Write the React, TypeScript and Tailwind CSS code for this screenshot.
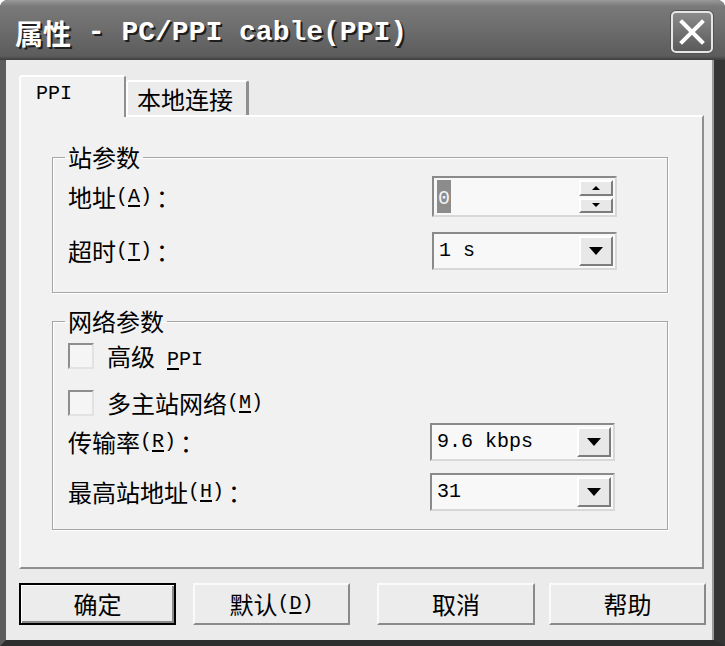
import React from "react";

/* ─── text helpers ─────────────────────────────────── */
function Lat({ children }: { children: React.ReactNode }) {
  return (
    <span className="font-['Liberation_Mono','Noto_Sans_CJK_SC',monospace] text-[20px]">
      {children}
    </span>
  );
}

function Key({ k }: { k: string }) {
  return (
    <Lat>
      (<span className="underline underline-offset-[3px]">{k}</span>)
    </Lat>
  );
}

/* ─── controls ─────────────────────────────────────── */
function DropBtn() {
  return (
    <div className="w-[34px] flex items-center justify-center bg-[#e8e8e8] border-2 border-t-white border-l-white border-r-[#7c7c7c] border-b-[#7c7c7c]">
      <svg width="14" height="8" viewBox="0 0 14 8">
        <path d="M0 0h14L7 8z" fill="#000" />
      </svg>
    </div>
  );
}

function Combo({ value }: { value: string }) {
  return (
    <div className="w-[185px] h-[38px] flex bg-[#f8f8f8] border-2 border-t-[#8a8a8a] border-l-[#8a8a8a] border-r-[#d8d8d8] border-b-[#d8d8d8] p-[2px]">
      <div className="flex-1 flex items-center pl-[3px] text-black">
        <Lat>{value}</Lat>
      </div>
      <DropBtn />
    </div>
  );
}

function Spin() {
  return (
    <div className="w-[185px] h-[41px] flex bg-[#f8f8f8] border-2 border-t-[#8a8a8a] border-l-[#8a8a8a] border-r-[#d8d8d8] border-b-[#d8d8d8] p-[2px]">
      <div className="flex-1 flex items-center pl-[1px]">
        <span className="bg-[#8c8c8c] text-[#f4f4f4] leading-[28px] px-[1px]">
          <Lat>0</Lat>
        </span>
      </div>
      <div className="w-[34px] flex flex-col gap-[2px]">
        <div className="flex-1 flex items-center justify-center bg-[#e8e8e8] border-2 border-t-white border-l-white border-r-[#7c7c7c] border-b-[#7c7c7c]">
          <svg width="8" height="4" viewBox="0 0 8 4">
            <path d="M0 4h8L4 0z" fill="#000" />
          </svg>
        </div>
        <div className="flex-1 flex items-center justify-center bg-[#e8e8e8] border-2 border-t-white border-l-white border-r-[#7c7c7c] border-b-[#7c7c7c]">
          <svg width="8" height="4" viewBox="0 0 8 4">
            <path d="M0 0h8L4 4z" fill="#000" />
          </svg>
        </div>
      </div>
    </div>
  );
}

function Check() {
  return (
    <div className="w-[26px] h-[26px] bg-[#f5f5f5] border-2 border-t-[#8e8e8e] border-l-[#8e8e8e] border-r-[#e2e2e2] border-b-[#e2e2e2]" />
  );
}

function Group({ title, children, className = "" }: { title: string; children: React.ReactNode; className?: string }) {
  return (
    <fieldset
      className={`ml-[31px] w-[616px] border border-[#a6a6a6] shadow-[inset_1px_1px_0_#fff,1px_1px_0_#fff] ${className}`}
    >
      <legend className="ml-[12px] px-[3px] leading-[28px] text-[24px] text-black">{title}</legend>
      {children}
    </fieldset>
  );
}

function Button({ children, primary, className = "" }: { children: React.ReactNode; primary?: boolean; className?: string }) {
  return (
    <div
      className={`h-[42px] flex items-center justify-center text-[24px] text-black bg-[#ececec] ${
        primary
          ? "border-2 border-black shadow-[inset_1px_1px_0_#fff,inset_-2px_-2px_0_#8a8a8a]"
          : "border-2 border-t-[#fafafa] border-l-[#fafafa] border-r-[#8a8a8a] border-b-[#8a8a8a]"
      } ${className}`}
    >
      {children}
    </div>
  );
}

/* ─── window ───────────────────────────────────────── */
export default function App() {
  return (
    <div className="w-[725px] h-[646px] bg-white font-['Noto_Sans_CJK_SC',sans-serif] overflow-hidden">
      <div className="w-full h-full flex flex-col rounded-t-[8px] overflow-hidden bg-[#4a4a4a]">
        {/* Title bar */}
        <div className="h-[60px] flex items-center pt-[4px] pl-[15px] pr-[12px] bg-[linear-gradient(#9a9a9a_0px,#7a7a7a_6px,#6c6c6c_30px,#5c5c5c_56px,#3e3e3e_60px)]">
          <div className="flex-1 flex items-center pt-[2px] text-white font-bold text-[28px] [text-shadow:2px_2px_0_#1e1e1e]">
            <span>属性</span>
            <span className="font-['Liberation_Mono',monospace] text-[28px] whitespace-pre"> - PC/PPI cable(PPI)</span>
          </div>
          <div className="w-[42px] h-[42px] rounded-[5px] border-2 border-[#e6e6e6] bg-[linear-gradient(#8a8a8a,#5a5a5a)] flex items-center justify-center shadow-[0_0_0_1px_#555]">
            <svg width="26" height="26" viewBox="0 0 26 26">
              <path d="M3 3L23 23M23 3L3 23" stroke="#fff" strokeWidth="4" strokeLinecap="square" />
            </svg>
          </div>
        </div>

        {/* Body */}
        <div className="flex-1 flex flex-col bg-[#ebebeb] border-l-[6px] border-r-[11px] border-b-[6px] border-l-[#5c5c5c] border-r-[#353535] border-b-[#2e2e2e] shadow-[inset_-2px_0_0_#9a9a9a]">
          {/* Tabs */}
          <div className="flex items-end ml-[13px] mt-[15px]">
            <div className="relative z-10 -mb-[2px] w-[107px] h-[42px] flex items-start pt-[5px] pl-[15px] leading-[24px] bg-[#f1f1f1] border-2 border-b-0 border-t-white border-l-white border-r-[#8f8f8f] rounded-t-[3px]">
              <Lat>PPI</Lat>
            </div>
            <div className="w-[123px] h-[35px] flex items-start pt-[3px] pl-[9px] leading-[28px] text-[24px] text-black bg-[#ececec] border-2 border-b-0 border-t-white border-l-white border-r-[#8f8f8f] border-r-[3px] rounded-t-[3px]">
              本地连接
            </div>
          </div>

          {/* Panel */}
          <div className="ml-[13px] w-[685px] h-[454px] bg-[#f1f1f1] border-2 border-t-white border-l-white border-r-[#8f8f8f] border-b-[#8f8f8f] pt-[26px] text-black">
            <Group title="站参数">
              <div className="pl-[15px] pt-[5px] pb-[22px] flex flex-col gap-[15px] text-[24px]">
                <div className="flex items-center h-[41px]">
                  <div className="w-[364px] flex items-center">
                    地址<Key k="A" /><span className="ml-[4px]">：</span>
                  </div>
                  <Spin />
                </div>
                <div className="flex items-center h-[38px]">
                  <div className="w-[364px] flex items-center">
                    超时<Key k="T" /><span className="ml-[4px]">：</span>
                  </div>
                  <Combo value="1 s" />
                </div>
              </div>
            </Group>

            <Group title="网络参数" className="mt-[14px]">
              <div className="pl-[15px] pt-[8px] pb-[18px] flex flex-col text-[24px]">
                <div className="flex items-center h-[25px]">
                  <Check />
                  <span className="ml-[13px]">高级</span>
                  <span className="ml-[12px]">
                    <Lat>
                      <span className="underline underline-offset-[3px]">P</span>PI
                    </Lat>
                  </span>
                </div>
                <div className="flex items-center h-[25px] mt-[22px]">
                  <Check />
                  <span className="ml-[13px]">多主站网络</span>
                  <Key k="M" />
                </div>
                <div className="flex items-center h-[38px] mt-[8px]">
                  <div className="w-[362px] flex items-center">
                    传输率<Key k="R" /><span className="ml-[4px]">：</span>
                  </div>
                  <Combo value="9.6 kbps" />
                </div>
                <div className="flex items-center h-[38px] mt-[12px]">
                  <div className="w-[362px] flex items-center">
                    最高站地址<Key k="H" /><span className="ml-[4px]">：</span>
                  </div>
                  <Combo value="31" />
                </div>
              </div>
            </Group>
          </div>

          {/* Buttons */}
          <div className="flex mt-[14px] ml-[13px]">
            <Button primary className="w-[157px]">确定</Button>
            <Button className="w-[157px] ml-[17px]">
              默认<Key k="D" />
            </Button>
            <Button className="w-[158px] ml-[27px]">取消</Button>
            <Button className="w-[157px] ml-[14px]">帮助</Button>
          </div>
        </div>
      </div>
    </div>
  );
}
